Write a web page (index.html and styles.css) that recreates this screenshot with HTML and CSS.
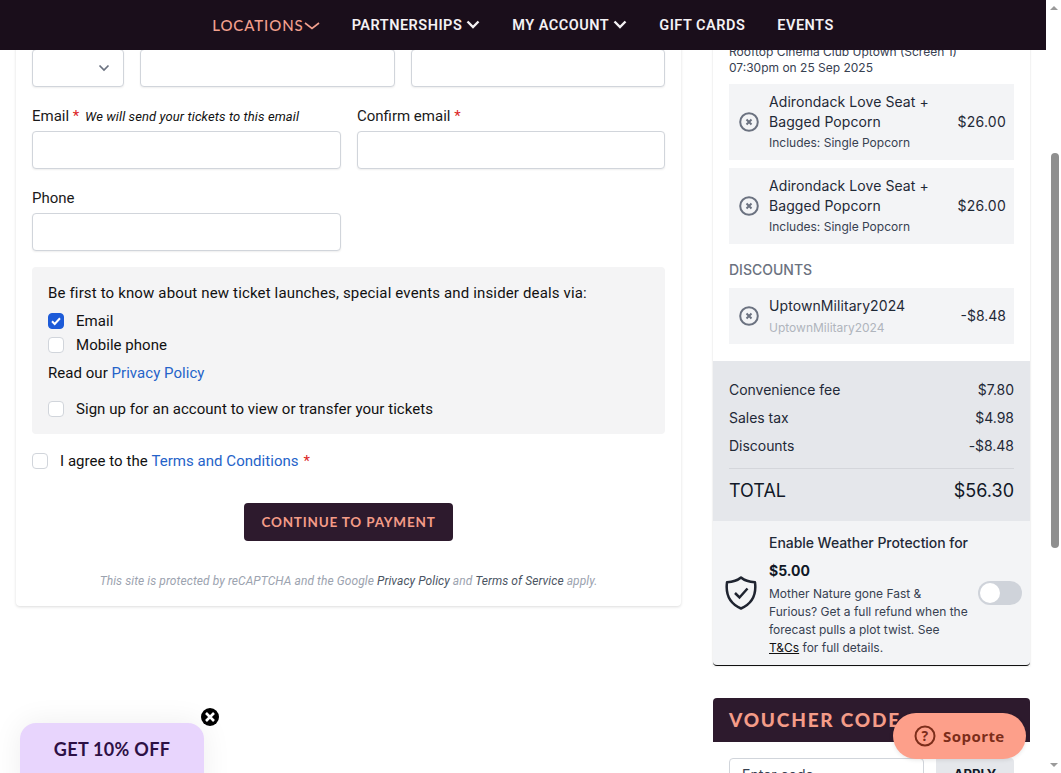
FILE: index.html
```html
<!DOCTYPE html>
<html lang="en">
<head>
<meta charset="utf-8">
<title>Checkout</title>
<link rel="stylesheet" href="styles.css">
</head>
<body>
<div class="app">
  <div class="viewport">
    <header class="nav">
      <a class="nav-item nav-active">LOCATIONS<svg class="chev-thin" viewBox="0 0 16 8"><path d="M1 1l7 5.500L15 1" fill="none" stroke="currentColor" stroke-width="1.600"/></svg></a>
      <a class="nav-item">PARTNERSHIPS<svg class="chev" viewBox="0 0 14 9"><path d="M1.500 1.500L7 7l5.500-5.500" fill="none" stroke="currentColor" stroke-width="2.400"/></svg></a>
      <a class="nav-item">MY ACCOUNT<svg class="chev" viewBox="0 0 14 9"><path d="M1.500 1.500L7 7l5.500-5.500" fill="none" stroke="currentColor" stroke-width="2.400"/></svg></a>
      <a class="nav-item">GIFT CARDS</a>
      <a class="nav-item">EVENTS</a>
    </header>

    <main class="columns">
      <section class="form-card">
        <div class="row-name">
          <div class="input select"><svg class="select-chev" viewBox="0 0 12 8"><path d="M1.500 1.500L6 6l4.500-4.500" fill="none" stroke="#6b7280" stroke-width="1.700"/></svg></div>
          <div class="input"></div>
          <div class="input"></div>
        </div>
        <div class="row-two row-email">
          <div class="field">
            <label class="label">Email <span class="req">*</span> <em class="hint">We will send your tickets to this email</em></label>
            <div class="input"></div>
          </div>
          <div class="field">
            <label class="label">Confirm email <span class="req">*</span></label>
            <div class="input"></div>
          </div>
        </div>
        <div class="row-two row-phone">
          <div class="field">
            <label class="label">Phone</label>
            <div class="input"></div>
          </div>
        </div>
        <div class="optin">
          <p class="optin-title">Be first to know about new ticket launches, special events and insider deals via:</p>
          <div class="check-row check-email"><span class="box box-on"><svg viewBox="0 0 16 16"><path d="M4 8.300l2.700 2.700L12 5.300" fill="none" stroke="#fff" stroke-width="2"/></svg></span>Email</div>
          <div class="check-row check-mobile"><span class="box"></span>Mobile phone</div>
          <p class="read">Read our <a class="link">Privacy Policy</a></p>
          <div class="check-row check-signup"><span class="box"></span>Sign up for an account to view or transfer your tickets</div>
        </div>
        <div class="check-row agree"><span class="box"></span>I agree to the&nbsp;<a class="link">Terms and Conditions</a><span class="req req-agree">*</span></div>
        <div class="submit"><button class="pay">CONTINUE TO PAYMENT</button></div>
        <p class="recaptcha">This site is protected by reCAPTCHA and the Google <b>Privacy Policy</b> and <b>Terms of Service</b> apply.</p>
      </section>

      <aside class="side">
        <section class="summary">
          <div class="summary-top">
            <p class="venue">Rooftop Cinema Club Uptown (Screen 1)<br>07:30pm on 25 Sep 2025</p>
            <div class="item">
              <svg class="remove" viewBox="0 0 20 20"><circle cx="10" cy="10" r="8.800" fill="none" stroke="#6b7280" stroke-width="2"/><path d="M7.500 7.500l5 5m0-5l-5 5" stroke="#6b7280" stroke-width="2"/></svg>
              <div class="item-body"><div class="item-name">Adirondack Love Seat + Bagged Popcorn</div><div class="item-sub">Includes: Single Popcorn</div></div>
              <div class="item-price">$26.00</div>
            </div>
            <div class="item">
              <svg class="remove" viewBox="0 0 20 20"><circle cx="10" cy="10" r="8.800" fill="none" stroke="#6b7280" stroke-width="2"/><path d="M7.500 7.500l5 5m0-5l-5 5" stroke="#6b7280" stroke-width="2"/></svg>
              <div class="item-body"><div class="item-name">Adirondack Love Seat + Bagged Popcorn</div><div class="item-sub">Includes: Single Popcorn</div></div>
              <div class="item-price">$26.00</div>
            </div>
            <h3 class="disc-title">DISCOUNTS</h3>
            <div class="item item-disc">
              <svg class="remove" viewBox="0 0 20 20"><circle cx="10" cy="10" r="8.800" fill="none" stroke="#6b7280" stroke-width="2"/><path d="M7.500 7.500l5 5m0-5l-5 5" stroke="#6b7280" stroke-width="2"/></svg>
              <div class="item-body"><div class="item-name">UptownMilitary2024</div><div class="item-sub item-sub-muted">UptownMilitary2024</div></div>
              <div class="item-price">-$8.48</div>
            </div>
          </div>
          <div class="totals">
            <div class="line"><span>Convenience fee</span><span>$7.80</span></div>
            <div class="line"><span>Sales tax</span><span>$4.98</span></div>
            <div class="line"><span>Discounts</span><span>-$8.48</span></div>
            <div class="line-total"><span>TOTAL</span><span>$56.30</span></div>
          </div>
          <div class="weather">
            <svg class="shield" viewBox="0 0 34 34"><path d="M17 1.500C20.500 4.500 26 6 31 6.300 32.500 18 28.500 27.500 17 32.500 5.500 27.500 1.500 18 3 6.300 8 6 13.500 4.500 17 1.500z" fill="none" stroke="#1f2430" stroke-width="2.500" stroke-linejoin="round"/><path d="M11 17l4.500 4.500L23.500 12.500" fill="none" stroke="#1f2430" stroke-width="2.500"/></svg>
            <div class="weather-body">
              <div class="weather-title">Enable Weather Protection for</div>
              <div class="weather-price">$5.00</div>
              <p class="weather-text">Mother Nature gone Fast &amp; Furious? Get a full refund when the forecast pulls a plot twist. See <a class="tc">T&amp;Cs</a> for full details.</p>
            </div>
            <span class="toggle"><span class="knob"></span></span>
          </div>
        </section>
        <section class="voucher">
          <h2 class="voucher-head">VOUCHER CODE</h2>
          <div class="voucher-body">
            <div class="voucher-input">Enter code</div>
            <button class="voucher-btn">APPLY</button>
          </div>
        </section>
      </aside>
    </main>

    <div class="promo">GET 10% OFF</div>
    <span class="promo-close"><svg viewBox="0 0 18 18"><circle cx="9" cy="9" r="9" fill="#000"/><path d="M5 5l8 8m0-8l-8 8" stroke="#fff" stroke-width="2.600"/></svg></span>
    <div class="support"><svg viewBox="0 0 22 22"><circle cx="11" cy="11" r="9.500" fill="none" stroke="#7c2d1a" stroke-width="2"/><text x="11" y="16" text-anchor="middle" class="support-q">?</text></svg>Soporte</div>
  </div>
  <div class="scrollbar">
    <span class="arrow-up"></span>
    <span class="thumb"></span>
    <span class="arrow-down"></span>
  </div>
</div>
</body>
</html>
```
FILE: styles.css
```css
* { box-sizing: border-box; }
html, body { margin: 0; height: 100%; overflow: hidden; background: #fff; }
body { font-family: "Roboto", "Liberation Sans", sans-serif; color: #111827; }
p, h2, h3 { margin: 0; }

.app { display: flex; width: 1061px; height: 773px; overflow: hidden; }
.viewport { position: relative; width: 1046px; height: 773px; overflow: hidden; flex: none; }

.nav { position: absolute; top: 0; left: 0; right: 0; height: 50px; z-index: 5; padding-top: 1px; background: #1a0e1b; display: flex; align-items: center; justify-content: center; gap: 32px; }
.nav-item { display: flex; align-items: center; color: #f4f1f4; font: 600 14.500px/20px "Roboto", sans-serif; letter-spacing: .5px; }
.nav-active { color: #f2a08e; font: 500 15px/18px "Lato", sans-serif; letter-spacing: .9px; padding-bottom: 2px; }
.chev { width: 14px; height: 9px; margin-left: 4px; margin-top: -2px; }
.chev-thin { width: 16px; height: 8px; margin-top: 3px; }

.columns { display: flex; align-items: flex-start; gap: 32px; padding: 33px 0 0 16px; }

.form-card { width: 665px; height: 573px; padding: 16px; background: #fff; border-radius: 4px; box-shadow: 0 1px 3px rgba(0,0,0,.14); flex: none; }
.input { height: 38px; background: #fff; border: 1px solid #d1d5db; border-radius: 4px; box-shadow: 0 1px 2px rgba(0,0,0,.07); }
.row-name { display: grid; grid-template-columns: 92px 255px 254px; gap: 16px; }
.select { display: flex; align-items: center; justify-content: flex-end; padding-right: 13px; }
.select-chev { width: 12px; height: 8px; }
.row-two { display: grid; grid-template-columns: 309px 308px; gap: 16px; }
.row-email { margin-top: 18px; }
.row-phone { margin-top: 18px; }
.label { display: block; height: 26px; font-size: 15px; line-height: 22px; color: #1a1a1a; }
.req { color: #dc2626; }
.hint { font-size: 13px; letter-spacing: .1px; color: #111; margin-left: 2px; }

.optin { margin-top: 16px; height: 167px; padding: 16px; background: #f4f4f5; border-radius: 4px; }
.optin-title { font-size: 15px; line-height: 20px; letter-spacing: .15px; color: #111; }
.check-row { display: flex; align-items: center; font-size: 15px; line-height: 20px; letter-spacing: .04px; color: #111; }
.box { flex: none; width: 16px; height: 16px; margin-right: 12px; background: #fff; border: 1px solid #d1d5db; border-radius: 4px; }
.box-on { background: #1d5bd8; border-color: #1d5bd8; }
.box-on svg { display: block; width: 16px; height: 16px; margin: -1px; }
.check-email { margin-top: 8px; }
.check-mobile { margin-top: 4px; }
.read { margin-top: 8px; font-size: 15px; line-height: 20px; letter-spacing: .04px; color: #111; }
.link { color: #2563c9; }
.check-signup { margin-top: 16px; }
.agree { margin-top: 17px; }
.req-agree { margin-left: 5px; }

.submit { display: flex; justify-content: center; margin-top: 32px; }
.pay { width: 209px; height: 38px; border: 0; border-radius: 4px; background: #2d1a2d; color: #f49c88; font: 700 13.500px/20px "Lato", sans-serif; letter-spacing: .8px; padding: 0; }
.recaptcha { margin-top: 32px; text-align: center; font-size: 12px; line-height: 16px; letter-spacing: .08px; font-style: italic; color: #9ca3af; }
.recaptcha b { font-weight: 400; color: #4b5563; }

.side { width: 317px; flex: none; font-family: "Inter", sans-serif; }
.summary { background: #fff; box-shadow: 0 0 2px rgba(0,0,0,.15); }
.summary-top { padding: 11px 16px 17px; }
.venue { font-size: 12px; line-height: 16px; color: #374151; margin-bottom: 8px; }
.item { display: flex; align-items: center; min-height: 76px; margin-bottom: 8px; padding: 0 8px 0 10px; background: #f3f4f6; }
.remove { width: 20px; height: 20px; flex: none; margin-right: 10px; }
.item-body { flex: 1; min-width: 0; padding-right: 12px; }
.item-name { font-size: 14px; line-height: 20px; color: #1f2937; letter-spacing: .08px; }
.item-sub { font-size: 12px; line-height: 20px; padding-top: 1px; margin-bottom: -1px; color: #374151; }
.item-price { font-size: 14px; line-height: 20px; color: #1f2937; letter-spacing: .25px; }
.disc-title { font-size: 14px; line-height: 20px; font-weight: 500; color: #6b7280; margin: 16px 0 8px; }
.item-disc { min-height: 56px; margin-bottom: 0; }
.item-disc .item-name { line-height: 24px; }
.item-disc .item-price { letter-spacing: 0; }
.item-sub-muted { color: #b0b5bd; padding-top: 0; margin-bottom: 0; }

.totals { height: 160px; padding: 15px 16px 0; background: #e5e7eb; }
.line { display: flex; justify-content: space-between; height: 28px; font-size: 14px; line-height: 28px; letter-spacing: -.03px; color: #1f2937; }
.line-total { display: flex; justify-content: space-between; margin-top: 8px; padding-top: 10px; border-top: 1px solid #d4d6db; font-size: 18px; line-height: 24px; color: #111827; }

.weather { display: flex; align-items: center; height: 145px; padding: 0 8px 0 11px; background: #f3f4f6; border-bottom: 1px solid #111; border-radius: 0 0 4px 4px; }
.shield { width: 34px; height: 34px; flex: none; margin-right: 11px; }
.weather-body { width: 203px; flex: none; }
.weather-title { font-size: 14px; line-height: 28px; font-weight: 500; color: #1f2937; white-space: nowrap; letter-spacing: -.05px; }
.weather-price { font-size: 14px; line-height: 28px; font-weight: 700; color: #111827; }
.weather-text { font-size: 12px; line-height: 18px; color: #374151; }
.tc { color: #111; text-decoration: underline; }
.toggle { display: block; width: 44px; height: 24px; padding: 2px; margin-left: 6px; flex: none; background: #cfd3da; border-radius: 12px; }
.knob { display: block; width: 20px; height: 20px; background: #fff; border-radius: 50%; }

.voucher { margin-top: 32px; }
.voucher-head { height: 44px; padding: 0 16px; background: #2d1a2d; border-radius: 4px 4px 0 0; color: #f49c88; font: 900 19px/44px "Lato", sans-serif; letter-spacing: 1.800px; }
.voucher-body { display: grid; grid-template-columns: 195px 78px; gap: 12px; padding: 16px; background: #fff; }
.voucher-input { height: 38px; padding: 0 12px; border: 1px solid #d1d5db; border-radius: 4px; font-size: 14px; line-height: 32px; color: #374151; }
.voucher-btn { height: 38px; border: 0; padding: 0 0 6px; border-radius: 0 4px 4px 0; background: #e5e7eb; color: #111827; font: 700 13px/32px "Inter", sans-serif; }

.promo { position: absolute; left: 20px; top: 723px; width: 184px; height: 70px; padding-top: 14px; text-align: center; z-index: 6; background: #e8d5fd; border-radius: 16px 16px 0 0; color: #2d1045; font: 700 18px/24px "Lato", sans-serif; letter-spacing: .3px; box-shadow: 0 0 30px rgba(0,0,0,.07); }
.promo-close { position: absolute; left: 201px; top: 708px; width: 18px; height: 18px; z-index: 7; }
.promo-close svg { display: block; width: 18px; height: 18px; }
.support { position: absolute; left: 893px; top: 713px; width: 133px; height: 46px; z-index: 7; display: flex; align-items: center; padding-left: 21px; background: #fd9f8a; border-radius: 23px; color: #7c2d1a; font: 700 15px/20px "Open Sans", sans-serif; letter-spacing: .45px; box-shadow: 0 1px 4px rgba(0,0,0,.1); }
.support svg { width: 22px; height: 22px; margin-right: 7px; flex: none; }
.support-q { font: 700 14px "Open Sans", sans-serif; fill: #7c2d1a; }

.scrollbar { width: 15px; height: 773px; flex: none; display: flex; flex-direction: column; align-items: center; background: #fff; }
.arrow-up { margin-top: 6px; border: 4px solid transparent; border-top: 0; border-bottom: 4px solid #9a9a9a; }
.thumb { width: 8px; height: 395px; margin-top: 143px; margin-left: 3px; background: #8f8f8f; border-radius: 4px; }
.arrow-down { margin-top: auto; margin-bottom: 6px; border: 4px solid transparent; border-bottom: 0; border-top: 4px solid #9a9a9a; }
```
